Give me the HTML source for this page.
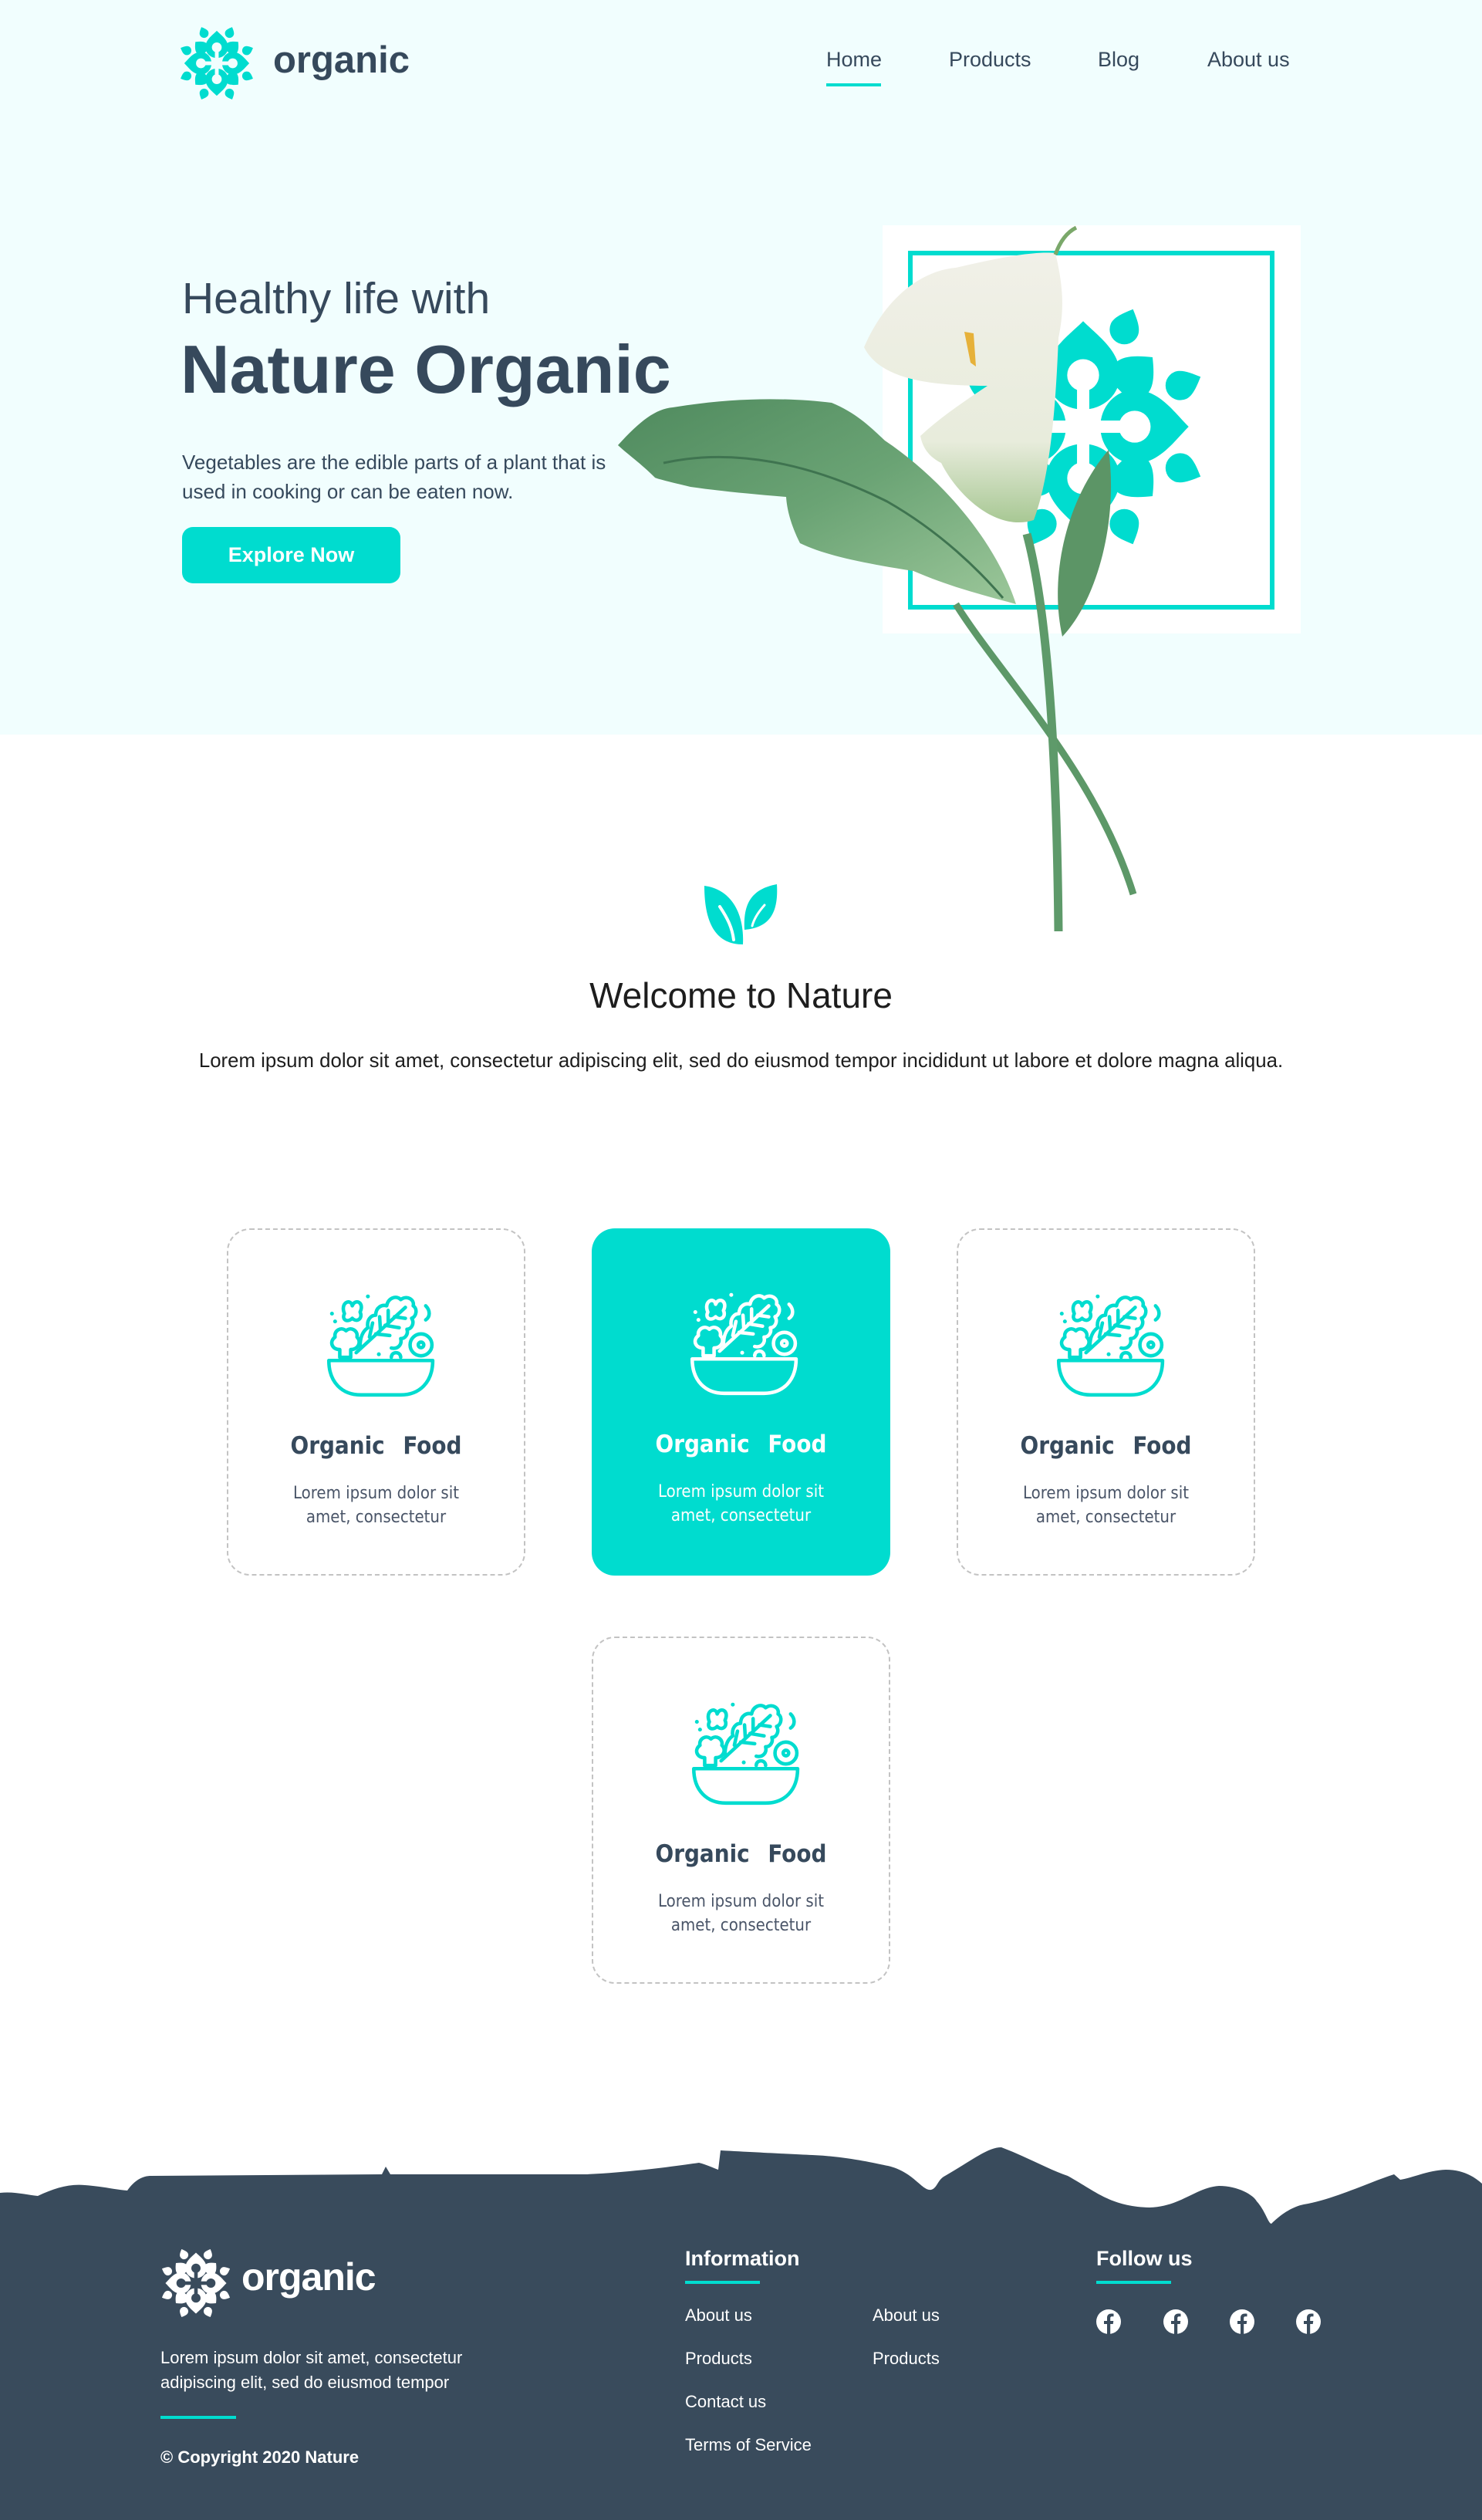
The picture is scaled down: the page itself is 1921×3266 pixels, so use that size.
<!DOCTYPE html>
<html><head><meta charset="utf-8">
<style>
*{margin:0;padding:0;box-sizing:border-box}
body{width:1921px;height:3266px;position:relative;background:#fff;font-family:"Liberation Sans",Arial,sans-serif;color:#36495c;overflow:hidden}
.a{position:absolute;white-space:nowrap}
.hero{position:absolute;left:0;top:0;width:1921px;height:952px;background:#f1fefe}
.nav{font-size:27px;color:#36495c;top:62px}
.card{position:absolute;width:387px;height:450px;border:2px dashed #c3c3c3;border-radius:30px;text-align:center}
.card.on{background:#00dccf;border:none}
.card svg{position:absolute;left:110px;top:68px}
.card h3{position:absolute;top:262px;width:100%;font-size:31px;font-weight:bold;word-spacing:14px;color:#36495c;font-family:"DejaVu Sans Condensed","Liberation Sans",sans-serif}
.card p{position:absolute;top:326px;width:100%;font-size:22px;line-height:31px;color:#4a5568;font-family:"DejaVu Sans Condensed","Liberation Sans",sans-serif}
.card.on h3,.card.on p{color:#fff}
.ft{color:#fff;font-size:22px}
</style></head><body>
<svg width="0" height="0" style="position:absolute">
<defs>
<symbol id="mand" viewBox="-50 -50 100 100">
<mask id="mk" maskUnits="userSpaceOnUse" x="-50" y="-50" width="100" height="100">
<rect x="-50" y="-50" width="100" height="100" fill="#fff"/>
<g fill="#000">
<g id="hole"><circle cx="0" cy="-21" r="6.5"/><rect x="-2.5" y="-21" width="5" height="20"/></g>
<use href="#hole" transform="rotate(90)"/><use href="#hole" transform="rotate(180)"/><use href="#hole" transform="rotate(270)"/>
<circle cx="0" cy="0" r="4"/>
</g></mask>
<g mask="url(#mk)">
<g id="big"><path d="M0,-43 C6,-37 15,-31 15,-21 A15,14 0 0 1 -15,-21 C-15,-31 -6,-37 0,-43Z"/></g>
<use href="#big" transform="rotate(90)"/><use href="#big" transform="rotate(180)"/><use href="#big" transform="rotate(270)"/>
<g id="dg"><path d="M0,-41 C5,-37 9,-33 9,-29 L9,-22 L-2,-22 A8,7 0 0 1 -9,-29 C-9,-33 -5,-37 0,-41Z" transform="rotate(45) translate(0,1)"/></g>
<use href="#dg" transform="rotate(90)"/><use href="#dg" transform="rotate(180)"/><use href="#dg" transform="rotate(270)"/>
<g id="sm"><path d="M0,-52 C3,-49 6,-46 6,-43 A6,6 0 0 1 -6,-43 C-6,-46 -3,-49 0,-52Z" transform="rotate(23)"/><path d="M0,-52 C3,-49 6,-46 6,-43 A6,6 0 0 1 -6,-43 C-6,-46 -3,-49 0,-52Z" transform="rotate(-23)"/></g>
<use href="#sm" transform="rotate(90)"/><use href="#sm" transform="rotate(180)"/><use href="#sm" transform="rotate(270)"/>
</g>
</symbol>
<symbol id="salad" viewBox="0 0 160 160">
<g fill="none" stroke="currentColor" stroke-width="4.5" stroke-linecap="round" stroke-linejoin="round">
<path d="M20,100 H153 C153,128 136,144 112,144 H61 C37,144 20,128 20,100Z"/>
<path d="M55,90 L118,32"/>
<path d="M72,70 L76,52 M86,60 L85,44 M96,50 L96,36 M80,66 L98,68 M92,55 L110,58 M104,44 L118,46"/>
<path d="M60,82 C60,70 64,62 70,58 C68,48 74,42 80,42 C80,32 88,28 94,30 C96,20 106,16 112,22 C120,16 130,22 128,30 C134,34 132,44 126,46 C130,52 126,60 120,60 C122,66 118,72 112,72 C114,80 108,86 100,84"/>
<circle cx="138" cy="80" r="14"/><circle cx="138" cy="80" r="3.5"/>
<path d="M100,96 C100,88 112,88 112,96"/>
<path d="M144,30 C150,36 150,44 144,48"/>
<path d="M40,40 C34,26 48,20 50,30 C54,20 66,26 60,38 C64,46 56,52 50,46 C44,52 36,48 40,40Z"/>
<path d="M34,96 V86 C24,86 20,76 28,70 C26,62 36,56 42,62 C48,56 58,62 56,70 C62,76 58,86 48,86 V96Z"/>
</g>
<g fill="currentColor"><circle cx="70" cy="18" r="2.5"/><circle cx="24" cy="40" r="2.5"/><circle cx="28" cy="50" r="2.5"/><circle cx="84" cy="92" r="2.5"/></g>
</symbol>
<symbol id="fb" viewBox="0 0 32 32"><circle cx="16" cy="16" r="16" fill="#fff"/><path d="M14,32 V19 H10 V15 H14 V11 C14,7 16.5,5.5 20,5.5 C21.5,5.5 22.5,5.7 22.5,5.7 V9.3 H20.5 C18.7,9.3 18.2,10.3 18.2,11.5 V15 H22.3 L21.7,19 H18.2 V32Z" fill="#394b5c"/></symbol>
</defs></svg>

<div class="hero"></div>
<svg class="a" style="left:232px;top:33px" width="98" height="98" viewBox="0 0 100 100"><use href="#mand" x="0" y="0" width="100" height="100" fill="#00dccf"/></svg>
<div class="a" style="left:354px;top:50px;font-size:49px;font-weight:bold;color:#36495c">organic</div>
<div class="a nav" style="left:1071px">Home</div>
<div class="a" style="left:1071px;top:108px;width:71px;height:4px;background:#00dccf"></div>
<div class="a nav" style="left:1230px">Products</div>
<div class="a nav" style="left:1423px">Blog</div>
<div class="a nav" style="left:1565px">About us</div>

<div class="a" style="left:236px;top:354px;font-size:57px;color:#36495c">Healthy life with</div>
<div class="a" style="left:234px;top:428px;font-size:88px;font-weight:bold;color:#36495c">Nature Organic</div>
<div class="a" style="left:236px;top:580px;font-size:26px;line-height:38px;color:#36495c">Vegetables are the edible parts of a plant that is<br>used in cooking or can be eaten now.</div>
<div class="a" style="left:236px;top:683px;width:283px;height:73px;background:#00dccf;border-radius:14px;color:#fff;font-size:27px;font-weight:bold;text-align:center;line-height:73px">Explore Now</div>

<div class="a" style="left:1144px;top:292px;width:542px;height:529px;background:#fff"></div>
<div class="a" style="left:1177px;top:325px;width:475px;height:465px;border:6px solid #00dccf"></div>
<svg class="a" style="left:1245px;top:394px" width="318" height="318" viewBox="0 0 100 100"><use href="#mand" width="100" height="100" fill="#00dccf"/></svg>

<svg class="a" style="left:0;top:0" width="1921" height="1300" viewBox="0 0 1921 1300">
<defs>
<linearGradient id="lg" x1="0" y1="0" x2="1" y2="1"><stop offset="0" stop-color="#4f8a5e"/><stop offset="0.5" stop-color="#6aa374"/><stop offset="1" stop-color="#9cc79a"/></linearGradient>
<linearGradient id="wg" x1="0" y1="0" x2="0" y2="1"><stop offset="0" stop-color="#f1f0e8"/><stop offset="0.7" stop-color="#e8ecdc"/><stop offset="1" stop-color="#a8c894"/></linearGradient>
</defs>
<path d="M1239,783 C1300,880 1420,1000 1469,1159" stroke="#5d9868" stroke-width="9" fill="none"/>
<path d="M1331,692 C1360,800 1370,1000 1372,1207" stroke="#5e9a6a" stroke-width="11" fill="none"/>
<path d="M801,577 C830,545 850,530 872,528 C950,515 1020,515 1078,522 C1110,535 1130,555 1147,571 C1220,620 1290,700 1317,783 C1270,770 1230,760 1184,740 C1120,730 1070,720 1037,704 C1025,680 1020,660 1019,644 C970,640 930,636 895,631 C870,625 850,620 849,619 C830,600 815,590 801,577Z" fill="url(#lg)"/>
<path d="M860,600 C950,580 1050,600 1150,650 C1220,690 1270,740 1300,775" stroke="#3f7450" stroke-width="3" fill="none"/>
<path d="M1437,583 C1450,680 1420,780 1377,825 C1360,750 1380,650 1437,583Z" fill="#5c9566"/>
<path d="M1120,450 C1150,380 1200,350 1239,347 C1290,335 1340,325 1368,328 C1378,370 1380,400 1372,438 C1368,540 1360,620 1340,674 C1290,690 1240,640 1220,600 C1200,590 1195,575 1193,565 C1220,540 1250,520 1280,500 C1200,500 1140,490 1120,450Z" fill="url(#wg)"/>
<path d="M1250,430 L1258,470 L1265,475 L1262,432Z" fill="#e6b13a"/>
<path d="M1368,330 C1375,310 1385,300 1395,295" stroke="#7aa86a" stroke-width="5" fill="none"/>
</svg>

<svg class="a" style="left:905px;top:1140px" width="110" height="90" viewBox="0 0 110 90"><path d="M8,8 C40,12 60,40 58,84 C25,84 8,60 8,8Z" fill="#00dccf"/><path d="M102,6 C70,12 58,30 60,65 C95,62 104,40 102,6Z" fill="#00dccf"/><path d="M28,35 C38,50 44,62 46,78" stroke="#fff" stroke-width="4" fill="none" stroke-linecap="round"/><path d="M86,33 C78,42 72,52 70,60" stroke="#fff" stroke-width="3" fill="none" stroke-linecap="round"/></svg>
<div class="a" style="left:0;width:1921px;text-align:center;top:1263px;font-size:46px;color:#1d1d1d">Welcome to Nature</div>
<div class="a" style="left:0;width:1921px;text-align:center;top:1361px;font-size:25.8px;color:#1d1d1d">Lorem ipsum dolor sit amet, consectetur adipiscing elit, sed do eiusmod tempor incididunt ut labore et dolore magna aliqua.</div>

<div class="card" style="left:294px;top:1592px"><svg width="162" height="162" style="color:#00dccf"><use href="#salad" width="162" height="162"/></svg><h3>Organic Food</h3><p>Lorem ipsum dolor sit<br>amet, consectetur</p></div>
<div class="card on" style="left:767px;top:1592px"><svg width="162" height="162" style="color:#fff"><use href="#salad" width="162" height="162"/></svg><h3>Organic Food</h3><p>Lorem ipsum dolor sit<br>amet, consectetur</p></div>
<div class="card" style="left:1240px;top:1592px"><svg width="162" height="162" style="color:#00dccf"><use href="#salad" width="162" height="162"/></svg><h3>Organic Food</h3><p>Lorem ipsum dolor sit<br>amet, consectetur</p></div>
<div class="card" style="left:767px;top:2121px"><svg width="162" height="162" style="color:#00dccf"><use href="#salad" width="162" height="162"/></svg><h3>Organic Food</h3><p>Lorem ipsum dolor sit<br>amet, consectetur</p></div>

<svg class="a" style="left:0;top:2760px" width="1921" height="506" viewBox="0 2760 1921 506">
<path d="M0,2842 C20,2840 35,2845 49,2846 C70,2836 90,2830 110,2832 C135,2834 150,2838 165,2839 C175,2825 185,2820 196,2820 L495,2818 L500,2808 L506,2818 L760,2818 C820,2815 870,2808 906,2803 C915,2805 925,2810 931,2812 L934,2787 C990,2790 1030,2792 1053,2793 C1100,2795 1140,2805 1151,2807 C1185,2815 1195,2840 1207,2838 C1215,2836 1215,2825 1225,2820 C1260,2800 1280,2783 1298,2783 C1330,2795 1360,2812 1384,2820 C1420,2840 1440,2860 1490,2861 C1530,2860 1550,2835 1580,2833 C1605,2833 1625,2845 1629,2853 C1640,2865 1644,2882 1648,2882 C1660,2870 1675,2860 1690,2857 C1730,2850 1770,2830 1807,2818 L1815,2825 C1830,2823 1850,2813 1874,2812 C1895,2812 1910,2820 1921,2830 V3266 H0Z" fill="#394b5c"/>
</svg>
<svg class="a" style="left:208px;top:2913px" width="92" height="92" viewBox="0 0 100 100"><use href="#mand" width="100" height="100" fill="#fff"/></svg>
<div class="a" style="left:313px;top:2922px;font-size:50px;font-weight:bold;color:#fff;letter-spacing:-1px">organic</div>
<div class="a ft" style="left:208px;top:3040px;line-height:32px">Lorem ipsum dolor sit amet, consectetur<br>adipiscing elit, sed do eiusmod tempor</div>
<div class="a" style="left:208px;top:3131px;width:98px;height:4px;background:#00dccf"></div>
<div class="a ft" style="left:208px;top:3172px;font-weight:bold">© Copyright 2020 Nature</div>

<div class="a ft" style="left:888px;top:2912px;font-size:27px;font-weight:bold">Information</div>
<div class="a" style="left:888px;top:2956px;width:97px;height:4px;background:#00dccf"></div>
<div class="a ft" style="left:888px;top:2988px">About us</div>
<div class="a ft" style="left:1131px;top:2988px">About us</div>
<div class="a ft" style="left:888px;top:3044px">Products</div>
<div class="a ft" style="left:1131px;top:3044px">Products</div>
<div class="a ft" style="left:888px;top:3100px">Contact us</div>
<div class="a ft" style="left:888px;top:3156px">Terms of Service</div>

<div class="a ft" style="left:1421px;top:2912px;font-size:27px;font-weight:bold">Follow us</div>
<div class="a" style="left:1421px;top:2956px;width:97px;height:4px;background:#00dccf"></div>
<svg class="a" style="left:1421px;top:2993px" width="32" height="32"><use href="#fb" width="32" height="32"/></svg>
<svg class="a" style="left:1508px;top:2993px" width="32" height="32"><use href="#fb" width="32" height="32"/></svg>
<svg class="a" style="left:1594px;top:2993px" width="32" height="32"><use href="#fb" width="32" height="32"/></svg>
<svg class="a" style="left:1680px;top:2993px" width="32" height="32"><use href="#fb" width="32" height="32"/></svg>
</body></html>
